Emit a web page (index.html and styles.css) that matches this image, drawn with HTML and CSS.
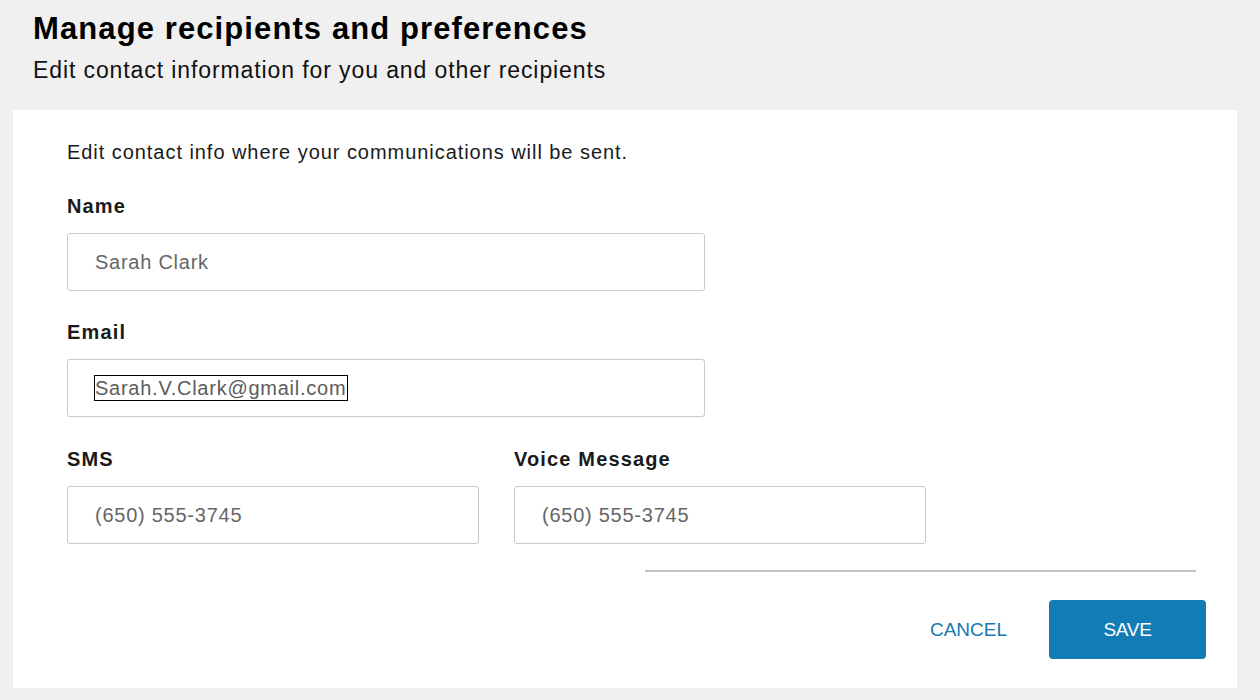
FILE: index.html
```html
<!DOCTYPE html>
<html lang="en">
<head>
<meta charset="utf-8">
<title>Manage recipients and preferences</title>
<link rel="stylesheet" href="styles.css">
</head>
<body>
<div class="page">
  <header class="page-header">
    <h1 class="title">Manage recipients and preferences</h1>
    <p class="subtitle">Edit contact information for you and other recipients</p>
  </header>
  <main class="card">
    <p class="intro">Edit contact info where your communications will be sent.</p>
    <div class="group">
      <div class="label">Name</div>
      <div class="field wide"><span class="value">Sarah Clark</span></div>
    </div>
    <div class="group group-next">
      <div class="label">Email</div>
      <div class="field wide email"><span class="value focused">Sarah.V.Clark@gmail.com</span></div>
    </div>
    <div class="row">
      <div class="group">
        <div class="label">SMS</div>
        <div class="field half"><span class="value">(650) 555-3745</span></div>
      </div>
      <div class="group">
        <div class="label">Voice Message</div>
        <div class="field half"><span class="value">(650) 555-3745</span></div>
      </div>
    </div>
    <div class="footer">
      <div class="divider"></div>
      <div class="actions">
        <span class="cancel">CANCEL</span>
        <span class="save">SAVE</span>
      </div>
    </div>
  </main>
</div>
</body>
</html>
```

FILE: styles.css
```css
html, body {
  margin: 0;
  padding: 0;
  background: #f0f0f0;
}
body {
  font-family: "Liberation Sans", Arial, Helvetica, sans-serif;
  color: #1a1a1a;
  width: 1260px;
  height: 700px;
  overflow: hidden;
}
.page {
  display: flex;
  flex-direction: column;
  padding-top: 11px;
}
.page-header {
  padding-left: 33px;
}
.title {
  margin: 0;
  font-size: 31px;
  line-height: 36px;
  font-weight: 700;
  letter-spacing: 1.1px;
  color: #000;
}
.subtitle {
  margin: 9px 0 0 0;
  font-size: 23px;
  line-height: 28px;
  letter-spacing: 0.9px;
  color: #111;
}
.card {
  margin: 26px 23px 0 13px;
  background: #fff;
  padding: 30px 31px 29px 54px;
  display: flex;
  flex-direction: column;
}
.intro {
  margin: 0;
  font-size: 20px;
  line-height: 24px;
  letter-spacing: 0.95px;
  color: #1a1a1a;
}
.group {
  display: flex;
  flex-direction: column;
  margin-top: 30px;
}
.group.group-next {
  margin-top: 29px;
}
.label {
  font-size: 20px;
  line-height: 24px;
  font-weight: 700;
  letter-spacing: 1.15px;
  color: #1a1a1a;
  margin-bottom: 15px;
}
.field {
  box-sizing: border-box;
  height: 58px;
  border: 1px solid #c9c9c9;
  border-radius: 3px;
  background: #fff;
  display: flex;
  align-items: center;
  padding-left: 27px;
}
.field.wide { width: 638px; }
.field.half { width: 412px; }
.field.email { padding-left: 26px; }
.value {
  font-size: 20px;
  line-height: 24px;
  letter-spacing: 0.75px;
  color: #666;
}
.value.focused {
  display: inline-block;
  border: 1px solid #000;
  padding: 0 1px 0 0;
  color: #5c5c5c;
}
.row {
  display: flex;
  gap: 35px;
}
.footer {
  display: flex;
  flex-direction: column;
  align-items: flex-end;
  margin-top: 26px;
}
.divider {
  width: 551px;
  height: 2px;
  background: #c4c4c4;
  margin-right: 10px;
}
.actions {
  display: flex;
  align-items: center;
  margin-top: 28px;
}
.cancel {
  font-size: 19px;
  color: #1878b0;
  margin-right: 42px;
}
.save {
  width: 157px;
  height: 59px;
  box-sizing: border-box;
  background: #137cb4;
  border-radius: 4px;
  color: #fff;
  font-size: 19px;
  display: flex;
  align-items: center;
  justify-content: center;
  letter-spacing: -0.3px;
}
```
